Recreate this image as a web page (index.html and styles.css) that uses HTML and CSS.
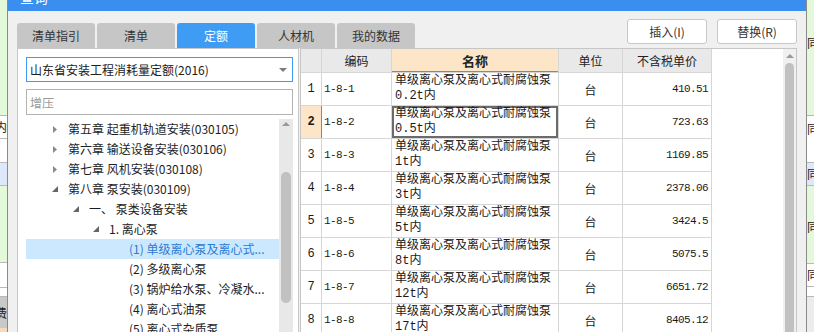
FILE: index.html
```html
<!DOCTYPE html>
<html lang="zh">
<head>
<meta charset="utf-8">
<title>查询</title>
<link rel="stylesheet" href="styles.css">
</head>
<body>
<div class="page">
  <div class="side side-left">
    <div class="seg green h115"></div>
    <div class="seg white line h23">内</div>
    <div class="seg white line h24"></div>
    <div class="seg blue line h23"></div>
    <div class="seg green line h77"></div>
    <div class="seg white line h25"></div>
    <div class="seg white line h9"></div>
    <div class="seg gray line h32">费</div>
    <div class="seg peach fill"></div>
  </div>

  <div class="dialog">
    <div class="titlebar"><span class="title">查询</span></div>
    <div class="dlg-body">
      <div class="topbar">
        <div class="tabs">
          <div class="tab">清单指引</div>
          <div class="tab">清单</div>
          <div class="tab active">定额</div>
          <div class="tab">人材机</div>
          <div class="tab">我的数据</div>
        </div>
        <div class="actions">
          <button class="btn">插入(I)</button>
          <button class="btn">替换(R)</button>
        </div>
      </div>

      <div class="main">
        <div class="panel">
          <div class="select">
            <span class="select-text">山东省安装工程消耗量定额(2016)</span>
            <span class="caret"></span>
          </div>
          <div class="search">增压</div>
          <div class="tree">
            <ul class="tree-list">
              <li class="node lv1"><span class="tw"><svg width="4" height="7" viewBox="0 0 4 7"><path d="M0 0L4 3.5L0 7Z" fill="#8a8a8a"/></svg></span><span class="lbl">第五章 起重机轨道安装(030105)</span></li>
              <li class="node lv1"><span class="tw"><svg width="4" height="7" viewBox="0 0 4 7"><path d="M0 0L4 3.5L0 7Z" fill="#8a8a8a"/></svg></span><span class="lbl">第六章 输送设备安装(030106)</span></li>
              <li class="node lv1"><span class="tw"><svg width="4" height="7" viewBox="0 0 4 7"><path d="M0 0L4 3.5L0 7Z" fill="#8a8a8a"/></svg></span><span class="lbl">第七章 风机安装(030108)</span></li>
              <li class="node lv1"><span class="tw"><svg width="6" height="6" viewBox="0 0 6 6"><path d="M6 0L6 6L0 6Z" fill="#666"/></svg></span><span class="lbl">第八章 泵安装(030109)</span></li>
              <li class="node lv2"><span class="tw"><svg width="6" height="6" viewBox="0 0 6 6"><path d="M6 0L6 6L0 6Z" fill="#666"/></svg></span><span class="lbl">一、 泵类设备安装</span></li>
              <li class="node lv3"><span class="tw"><svg width="6" height="6" viewBox="0 0 6 6"><path d="M6 0L6 6L0 6Z" fill="#666"/></svg></span><span class="lbl">1. 离心泵</span></li>
              <li class="node lv4 sel"><span class="tw"></span><span class="lbl">(1) 单级离心泵及离心式...</span></li>
              <li class="node lv4"><span class="tw"></span><span class="lbl">(2) 多级离心泵</span></li>
              <li class="node lv4"><span class="tw"></span><span class="lbl">(3) 锅炉给水泵、冷凝水...</span></li>
              <li class="node lv4"><span class="tw"></span><span class="lbl">(4) 离心式油泵</span></li>
              <li class="node lv4"><span class="tw"></span><span class="lbl">(5) 离心式杂质泵</span></li>
            </ul>
            <div class="vscroll tree-scroll">
              <span class="sb-up"></span>
              <span class="sb-thumb tree-thumb"></span>
            </div>
          </div>
        </div>

        <div class="grid">
          <div class="table">
            <div class="row head">
              <div class="cell num"></div>
              <div class="cell c-center">编码</div>
              <div class="cell c-center name-head">名称</div>
              <div class="cell c-center">单位</div>
              <div class="cell c-center">不含税单价</div>
            </div>
            <div class="row">
              <div class="cell num">1</div>
              <div class="cell code">1-8-1</div>
              <div class="cell name">单级离心泵及离心式耐腐蚀泵<br>0.2t内</div>
              <div class="cell c-center">台</div>
              <div class="cell price">410.51</div>
            </div>
            <div class="row current">
              <div class="cell num">2</div>
              <div class="cell code">1-8-2</div>
              <div class="cell name focus">单级离心泵及离心式耐腐蚀泵<br>0.5t内</div>
              <div class="cell c-center">台</div>
              <div class="cell price">723.63</div>
            </div>
            <div class="row">
              <div class="cell num">3</div>
              <div class="cell code">1-8-3</div>
              <div class="cell name">单级离心泵及离心式耐腐蚀泵<br>1t内</div>
              <div class="cell c-center">台</div>
              <div class="cell price">1169.85</div>
            </div>
            <div class="row">
              <div class="cell num">4</div>
              <div class="cell code">1-8-4</div>
              <div class="cell name">单级离心泵及离心式耐腐蚀泵<br>3t内</div>
              <div class="cell c-center">台</div>
              <div class="cell price">2378.06</div>
            </div>
            <div class="row">
              <div class="cell num">5</div>
              <div class="cell code">1-8-5</div>
              <div class="cell name">单级离心泵及离心式耐腐蚀泵<br>5t内</div>
              <div class="cell c-center">台</div>
              <div class="cell price">3424.5</div>
            </div>
            <div class="row">
              <div class="cell num">6</div>
              <div class="cell code">1-8-6</div>
              <div class="cell name">单级离心泵及离心式耐腐蚀泵<br>8t内</div>
              <div class="cell c-center">台</div>
              <div class="cell price">5075.5</div>
            </div>
            <div class="row">
              <div class="cell num">7</div>
              <div class="cell code">1-8-7</div>
              <div class="cell name">单级离心泵及离心式耐腐蚀泵<br>12t内</div>
              <div class="cell c-center">台</div>
              <div class="cell price">6651.72</div>
            </div>
            <div class="row">
              <div class="cell num">8</div>
              <div class="cell code">1-8-8</div>
              <div class="cell name">单级离心泵及离心式耐腐蚀泵<br>17t内</div>
              <div class="cell c-center">台</div>
              <div class="cell price">8405.12</div>
            </div>
          </div>
          <div class="grid-fill"></div>
          <div class="vscroll grid-scroll">
            <span class="sb-up"></span>
            <span class="sb-thumb grid-thumb"></span>
          </div>
        </div>
      </div>
    </div>
  </div>

  <div class="side side-right">
    <div class="seg green h115 top pt36">同</div>
    <div class="seg white line h47 top pt6">同</div>
    <div class="seg blue line h23">同</div>
    <div class="seg green line h78 top pt34">同</div>
    <div class="seg white line h23">同</div>
    <div class="seg white line h10"></div>
    <div class="seg lightgray line fill"></div>
  </div>
</div>
</body>
</html>
```

FILE: styles.css
```css
* { box-sizing: border-box; }
html, body { margin: 0; padding: 0; }
body {
  width: 814px;
  height: 332px;
  overflow: hidden;
  background: #f0f0f0;
  font-family: "Noto Sans CJK SC", "Noto Sans", sans-serif;
  font-size: 12px;
  color: #222;
}
.page { display: flex; width: 814px; height: 332px; }

/* background window strips */
.side {
  width: 7px;
  flex: none;
  display: flex;
  flex-direction: column;
  overflow: hidden;
  background: #e4f8da;
}
.seg {
  flex: none;
  display: flex;
  align-items: center;
  overflow: hidden;
  white-space: nowrap;
  font-size: 12px;
  line-height: 14px;
  color: #222;
}
.side-left .seg { justify-content: flex-end; }
.side-right .seg { justify-content: flex-start; }
.seg.top { align-items: flex-start; }
.pt36 { padding-top: 36px; }
.pt34 { padding-top: 34px; }
.pt6 { padding-top: 6px; }
.line { border-top: 1px solid #b9b9b9; }
.green { background: #e4f8da; }
.white { background: #fff; }
.blue { background: #dde8fa; }
.gray { background: #c9c9c9; }
.lightgray { background: #ececec; }
.peach { background: #f7dbb8; }
.fill { flex: 1; }
.h9 { height: 9px; }
.h10 { height: 10px; }
.h23 { height: 23px; }
.h24 { height: 24px; }
.h25 { height: 25px; }
.h32 { height: 32px; }
.h47 { height: 47px; }
.h77 { height: 77px; }
.h78 { height: 78px; }
.h115 { height: 115px; }

/* dialog */
.dialog {
  width: 800px;
  flex: none;
  display: flex;
  flex-direction: column;
  border-left: 1px solid #8a8a8a;
  border-right: 1px solid #8a8a8a;
  background: #f0f0f0;
}
.titlebar {
  height: 11px;
  flex: none;
  background: #3a8ef0;
  overflow: hidden;
  padding-left: 12px;
}
.title {
  display: block;
  margin-top: -10px;
  font-size: 14px;
  line-height: 14px;
  color: #fff;
}
.dlg-body {
  flex: 1;
  min-height: 0;
  display: flex;
  flex-direction: column;
  padding: 0 9px;
}
.topbar {
  height: 37px;
  flex: none;
  display: flex;
  align-items: flex-end;
}
.tabs { display: flex; gap: 2px; }
.tab {
  width: 78px;
  height: 25px;
  line-height: 25px;
  text-align: center;
  background: #c6c6c6;
  color: #333;
  border-radius: 3px 3px 0 0;
  font-size: 12px;
}
.tab.active { background: #3f9cf5; color: #fff; }
.actions {
  margin-left: auto;
  margin-bottom: 4px;
  display: flex;
  gap: 10px;
}
.btn {
  width: 80px;
  height: 25px;
  padding: 0;
  border: 1px solid #c8c8c8;
  border-radius: 3px;
  background: #fff;
  font-family: "Noto Sans CJK SC", "Noto Sans", sans-serif;
  font-size: 12px;
  line-height: 23px;
  color: #333;
}

.main {
  flex: 1;
  min-height: 0;
  display: flex;
  gap: 1px;
}

/* left panel */
.panel {
  width: 282px;
  flex: none;
  display: flex;
  flex-direction: column;
  background: #fff;
  border: 1px solid #c8c8c8;
  border-bottom: none;
  padding: 8px 5px 0 8px;
}
.select {
  height: 25px;
  flex: none;
  display: flex;
  align-items: center;
  border: 1px solid #3d9bf2;
  padding: 0 5px 0 3px;
  font-size: 12px;
  line-height: 16px;
  color: #222;
}
.select-text { flex: 1; }
.caret {
  width: 0;
  height: 0;
  border-left: 4px solid transparent;
  border-right: 4px solid transparent;
  border-top: 4px solid #7c7c7c;
}
.search {
  margin-top: 7px;
  height: 26px;
  flex: none;
  display: flex;
  align-items: center;
  border: 1px solid #b3b3b3;
  padding-left: 3px;
  color: #9a9a9a;
  font-size: 12px;
}
.tree {
  flex: 1;
  min-height: 0;
  display: flex;
  margin-top: 4px;
}
.tree-list {
  flex: 1;
  min-width: 0;
  list-style: none;
  margin: 0;
  padding: 0;
}
.node {
  height: 20px;
  display: flex;
  align-items: center;
  white-space: nowrap;
  overflow: hidden;
  font-size: 12px;
  line-height: 20px;
  color: #1e1e1e;
}
.lv1 { padding-left: 21px; }
.lv2 { padding-left: 42px; }
.lv3 { padding-left: 62px; }
.lv4 { padding-left: 82px; }
.tw {
  width: 16px;
  flex: none;
  display: flex;
  justify-content: center;
  align-items: center;
}
.tw svg { display: block; }
.lbl { margin-left: 5px; }
.node.sel { background: #cce8ff; color: #2b7bd0; }

/* scrollbars */
.vscroll {
  flex: none;
  display: flex;
  flex-direction: column;
  align-items: center;
}
.tree-scroll { width: 14px; background: #e8e8e8; }
.grid-scroll { width: 13px; background: #f0f0f0; }
.sb-up {
  width: 0;
  height: 0;
  border-left: 4px solid transparent;
  border-right: 4px solid transparent;
  border-bottom: 4px solid #9a9a9a;
}
.sb-thumb {
  display: block;
  border-radius: 5px;
  background: #c1c1c1;
}
.tree-scroll .sb-up { margin-top: 3px; }
.tree-thumb { width: 10px; height: 131px; margin-top: 46px; }
.grid-scroll .sb-up { margin-top: 5px; }
.grid-thumb { width: 9px; flex: 1; margin-top: 5px; border-radius: 5px 5px 0 0; }

/* data grid */
.grid {
  flex: 1;
  min-width: 0;
  display: flex;
  background: #fff;
  border: 1px solid #c6c6c6;
  border-bottom: none;
}
.table {
  width: 411px;
  flex: none;
  display: flex;
  flex-direction: column;
}
.grid-fill { flex: 1; }
.row {
  display: grid;
  grid-template-columns: 21px 70px 167px 64px 89px;
  height: 33px;
  flex: none;
  border-bottom: 1px solid #d6d6d6;
}
.row.head { height: 24px; background: #e9e9e9; }
.cell {
  display: flex;
  align-items: center;
  border-right: 1px solid #d6d6d6;
  overflow: hidden;
  white-space: nowrap;
  font-size: 12px;
  line-height: 15px;
  color: #1a1a1a;
}
.c-center { justify-content: center; }
.head .cell { color: #222; }
.name-head {
  background: #fde5c7;
  font-weight: bold;
  font-size: 13px;
  box-shadow: inset 0 -1px 0 #3c9cf0;
}
.num {
  justify-content: center;
  font-family: "Liberation Mono", "DejaVu Sans Mono", monospace;
  font-size: 12px;
}
.code {
  padding-left: 2px;
  font-family: "Liberation Mono", "DejaVu Sans Mono", monospace;
  font-size: 11px;
  letter-spacing: -0.6px;
}
.name {
  padding-left: 3px;
  white-space: normal;
  font-family: "Liberation Mono", "Noto Sans CJK SC", monospace;
  font-size: 12px;
  line-height: 15px;
}
.price {
  justify-content: flex-end;
  padding-right: 3px;
  font-family: "Liberation Mono", "DejaVu Sans Mono", monospace;
  font-size: 11px;
  letter-spacing: -0.6px;
}
.current .num {
  background: #fde5c7;
  font-weight: bold;
  border-right-color: #3c9cf0;
}
.name.focus { box-shadow: inset 0 0 0 2px #6b6b6b; }
```
